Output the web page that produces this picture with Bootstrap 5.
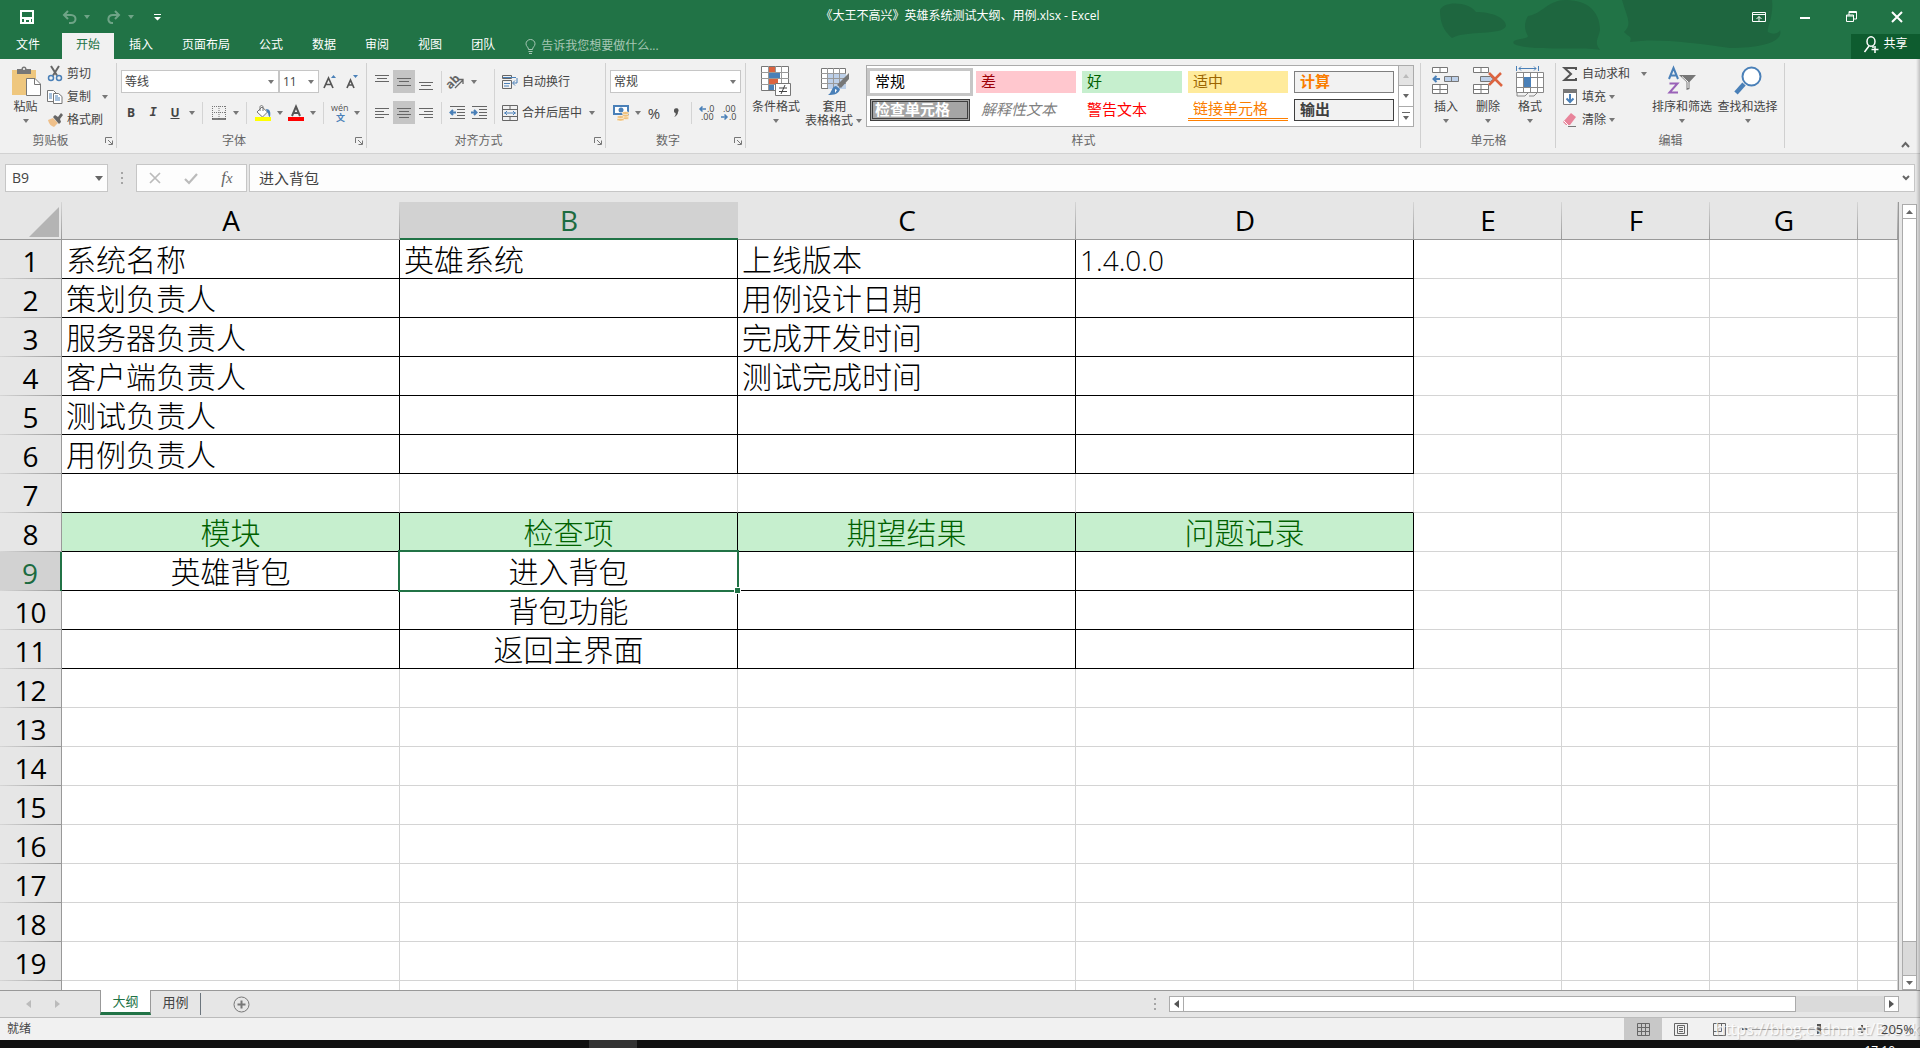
<!DOCTYPE html>
<html lang="zh-CN">
<head>
<meta charset="utf-8">
<meta name="viewport" content="width=device-width, initial-scale=1">
<title>《大王不高兴》英雄系统测试大纲、用例.xlsx - Excel</title>
<link href="https://cdn.jsdelivr.net/npm/bootstrap@5.3.0/dist/css/bootstrap.min.css" rel="stylesheet">
<style>
:root{--xl:#217346;--ink:#444;--line:#c6c6c6;--chrome:#e6e6e6}
body{font-family:"Open Sans","Noto Sans CJK SC",sans-serif;font-size:12px;line-height:14px;color:var(--ink);background:var(--chrome)}
button,input,select{font:inherit;color:inherit;border:0;background:none;padding:0;margin:0}
button{display:inline-flex;align-items:center;justify-content:center}
svg{display:block;flex:none;overflow:visible}
.ar::before{content:"";border:3px solid transparent;border-top:4px solid #777;border-bottom:0}
.ar{width:11px;flex:none;display:inline-flex;align-items:center;justify-content:center}
.app{height:100vh}
.topbar{background:var(--xl);color:#fff}
.titlebar{height:33px}
.titlebar .qat{padding-left:20px;gap:10px}
.qat .undo{margin-left:18px}
.dim{opacity:.35}
.topbar .ar::before{border-top-color:#fff}
.doctitle{left:0;right:0;top:9px}
.blobs{right:100px;top:0}
.winbtns button{width:46px;height:33px}
.tabrow{height:26px}
.tabrow a{color:#fff;text-decoration:none;padding:0 14px;margin-right:1px;height:26px;line-height:24px}
.tabrow a.file{padding:0 21px 0 16px}
.tabrow a.on{background:#f1f1f1;color:var(--xl)}
.tellme{color:#a6c7b5;margin-left:15px;gap:5px}
.tellme input{width:160px}
.tellme input::placeholder{color:#a6c7b5;opacity:1}
.share{background:#0e5c2f;width:69px;height:25px;gap:4px}
.ribbon{background:#f1f1f1;border-bottom:1px solid #d2d2d2;height:95px}
.grp{position:relative;flex:none;display:flex;flex-direction:column;margin-bottom:5px}
.grp::after{content:"";position:absolute;right:0;top:4px;bottom:0;width:1px;background:#d0d0d0}
.grp-body{display:flex;height:75px}
.grp-label{height:14px;text-align:center;color:#666;display:flex;align-items:center;margin-top:2px}
.grp-label span{flex:1}
.grp-label button{width:16px;height:14px}
.g-clip{width:117px}.g-font{width:250px}.g-align{width:239px}.g-num{width:140px}.g-style{width:675px}.g-cell{width:135px}.g-edit{width:229px}
.big{flex-direction:column;justify-content:flex-start;padding-top:7px}
.big svg{margin-bottom:4px;height:30px}
.big .ar{height:14px}
.stack3{padding-top:3px}
.sm{height:23px;gap:4px;justify-content:flex-start}
.rows{padding-top:11px;gap:8px}
.rows>div{height:23px;display:flex;align-items:center}
.ib{width:22px;height:23px;flex:none}
.ib.on{background:#c5c5c5}
.sep{width:1px;height:22px;background:#d4d4d4;margin:0 5px;flex:none}
.sep4{margin:0 4px}
.combo{position:relative;background:#fff;border:1px solid var(--line);height:23px;display:flex}
.combo select{appearance:none;width:100%;padding-left:3px;outline:0}
.combo .ar{position:absolute;right:2px;top:0;bottom:0;pointer-events:none}
.gallery{border:1px solid #ababab;background:#fff;height:62px;margin-top:6px;display:grid;grid-template-columns:repeat(5,100px);grid-auto-rows:22px;gap:6px;padding:5px 4px 5px 3px;font-size:15px}
.gallery button{justify-content:flex-start;padding:0 0 2px 5px;line-height:20px}
.st-sel{box-shadow:0 0 0 3px var(--line);color:#000}
.st-check{background:#a5a5a5;color:#fff;font-weight:700;border:3px double #3f3f3f}
.gallery .st-check{padding-left:2px;line-height:16px}
.galscroll{width:15px;height:62px;margin-top:6px;border:1px solid #ababab;border-left:0;background:#fff}
.galscroll button{flex:1;border-top:1px solid #ababab}
.galscroll button:first-child{border-top:0;background:#e4e4e4}
.formula{padding:10px 5px 10px;height:48px}
.fbox{background:#fdfdfd;border:1px solid var(--line);height:28px}
.namebox{width:103px}
.namebox input{width:80px;padding:0 0 2px 6px;font-size:14px}
.fxbtns{width:111px;margin-right:2px}
.fxbtns button{width:36px}
.fxglyph{font-family:"Liberation Serif",serif;font-size:17px;font-style:italic;color:#666}
.fxin{font-size:15px}
.fxin input{padding:0 0 2px 9px}
.dots{width:28px;display:flex;flex-direction:column;align-items:center;justify-content:center;gap:3px}
.dots i{width:2px;height:2px;background:#a5a5a5}
.sheetwrap{border-right:1px solid #999}
.sheet{table-layout:fixed;border-collapse:separate;border-spacing:0;width:100%;background:#fff;color:#000}
.sheet th{background:var(--chrome);font-size:28px;font-weight:400;text-align:center;padding:0}
.sheet thead th{height:38px;line-height:34px;border-bottom:1px solid #999;background:linear-gradient(#d6d6d6,#999) right/1px 100% no-repeat var(--chrome)}
.sheet thead th:not(:first-child){padding-bottom:1px}
.sheet tbody th{line-height:36px;padding-top:2px;border-right:1px solid #999;background:linear-gradient(90deg,#d6d6d6,#999) bottom/100% 1px no-repeat var(--chrome)}
.sheet thead th.cur{background:#d2d2d2;color:#1c6b40;border-bottom:2px solid var(--xl);padding-bottom:0}
.sheet tbody th.cur{background-color:#d2d2d2;color:#1c6b40;border-right:2px solid var(--xl)}
.sheet td{height:39px;padding:2px 4px 0;font-size:30px;font-weight:300;line-height:36px;white-space:nowrap;border-right:1px solid #d4d4d4;border-bottom:1px solid #d4d4d4}
.sheet .fr td:nth-child(-n+5){border-color:#000}
.sheet .pre td:nth-child(-n+5){border-bottom-color:#000}
.sheet .hd td:nth-child(-n+5){background:#c6efce;color:#006100}
.sheet .ctr td{text-align:center}
.sheet td.num{font-size:28px}
.sheet td.active-cell{position:relative}
.active-cell::before{content:"";position:absolute;inset:-2px -2px -2px -2px;border:2px solid var(--xl)}
.active-cell::after{content:"";position:absolute;right:-3px;bottom:-3px;width:5px;height:5px;background:var(--xl);outline:1px solid #fff}
.corner-tri{margin:3px 3px 0 auto;width:30px;height:30px;background:#b4b4b4;clip-path:polygon(100% 0,100% 100%,0 100%)}
.vscroll{width:15px;margin:2px 3px 0 3px;background:#dadada;border:1px solid #ababab;border-top:0;border-bottom:0}
.vscroll button,.hscroll button{background:#fff;border:1px solid #ababab;width:15px;height:15px;flex:none}
.vscroll button{margin-left:-1px}
.vthumb{background:#fff;border-bottom:1px solid #ababab;flex:0 0 92%}
.tabsbar{height:28px;border-top:1px solid #999;border-bottom:1px solid #bbb;font-size:13px;line-height:16px}
.tabsbar a{color:var(--ink);text-decoration:none;height:25px;width:49px;text-align:center;padding-top:3px}
.tabsbar a.on{background:#fff;color:var(--xl);border:1px solid #999;border-top:0;border-bottom:3px solid var(--xl);width:51px;margin-top:-1px}
.nav2{width:100px;padding-left:14px}
.nav2 button{width:29px}
.addsheet{margin-left:32px}
.hscroll{width:730px;height:16px;background:#dadada;margin-right:21px}
.hthumb{width:613px;background:#fff;border:1px solid #ababab;margin-left:-1px}
.status{background:#f1f1f1;height:22px}
.status .vb{width:38px;height:22px}
.status .vb.on{background:#c8c8c8}
.zoomr{appearance:none;width:102px;height:12px;background:linear-gradient(#999,#999) center/100% 1px no-repeat}
.zoomr::-webkit-slider-thumb{appearance:none;width:4px;height:10px;background:#555}
.zoompct{width:54px;padding-left:15px;font-size:13px}
.wmark{right:0;top:1px;font-size:16px;line-height:20px;color:#fff;opacity:.75;text-shadow:1px 1px 1px #aaa;pointer-events:none}
.task{background:#101010;height:8px;color:#fff;overflow:hidden}
.task .runapp{width:48px;background:#333;margin-left:589px}
.task .clock{margin-right:25px;padding-top:4px}
.edge{right:0;top:59px;bottom:8px;width:4px;background:linear-gradient(90deg,transparent,#0003);pointer-events:none}
</style>
</head>
<body>
<div class="app d-flex flex-column overflow-hidden position-relative">

<header class="topbar position-relative flex-shrink-0">
  <svg class="blobs position-absolute" width="400" height="52" viewBox="0 0 400 52" fill="#1e663f">
    <path d="M20 10C24 0 50 2 56 12c16 0 30 6 30 14-4 10-40 4-54 12-4-4-12-10-12-28zM108 16c14-2 20-16 38-16 24 0 34 14 34 30-2 10-6 12 0 20-16-4-70 2-86-6-4-6 14-4 14-8-4-6-4-14 0-20zM202 0h150c2 16-6 30-4 32 6 4 12 0 12-2 4 12-20 18-50 18-40-6-76-10-100-6 2-6 0-4-6-10 8-8 4-12-2-32z"/>
  </svg>
  <div class="titlebar d-flex align-items-center">
    <div class="qat d-flex align-items-center">
      <button aria-label="保存"><svg width="14" height="14" fill="none" stroke="#fff" stroke-width="2"><path d="M1 1h12v12H1zM1 8h12M5 13v-4h5v4"/></svg></button>
      <button class="dim undo" aria-label="撤消"><svg width="15" height="14" fill="none" stroke="#fff" stroke-width="2"><path d="M6 1L2 5l4 4M2 5h7c6 0 6 8 0 8H7"/></svg><span class="ar ms-1"></span></button>
      <button class="dim ms-1" aria-label="恢复"><svg width="15" height="14" fill="none" stroke="#fff" stroke-width="2"><path d="M9 1l4 4-4 4M13 5H7c-6 0-6 8-1 8h1"/></svg><span class="ar ms-1"></span></button>
      <button class="ms-2" aria-label="自定义快速访问工具栏"><svg width="7" height="8" fill="#fff"><path d="M0 1h7v1H0zM0 4h7L3.500 7.500z"/></svg></button>
    </div>
    <div class="doctitle position-absolute text-center">《大王不高兴》英雄系统测试大纲、用例.xlsx - Excel</div>
    <div class="winbtns d-flex ms-auto position-relative">
      <button aria-label="功能区显示选项"><svg width="14" height="12" fill="none" stroke="#fff"><path d="M.5 1.500h13v9H.5zM0 3.500h14M7 10V5.500M4.500 8L7 5.500 9.500 8"/></svg></button>
      <button aria-label="最小化"><svg width="10" height="12"><path d="M0 6h10v2H0z" fill="#fff"/></svg></button>
      <button aria-label="还原"><svg width="11" height="11" fill="none" stroke="#fff"><path d="M.5 4h7v6.500h-7zM.5 5h7M3 4V.5h7.500V8H8M3 1.500h7"/></svg></button>
      <button aria-label="关闭"><svg width="10" height="10" stroke="#fff" stroke-width="2"><path d="M0 0l10 10M10 0L0 10"/></svg></button>
    </div>
  </div>
  <nav class="tabrow d-flex align-items-center">
    <a class="file" href="#">文件</a><a class="on" href="#">开始</a><a href="#">插入</a><a href="#">页面布局</a><a href="#">公式</a><a href="#">数据</a><a href="#">审阅</a><a href="#">视图</a><a href="#">团队</a>
    <label class="tellme d-flex align-items-center"><svg width="11" height="15" fill="none" stroke="#a6c7b5"><path d="M3.500 10.500C3.500 8 1 7.500 1 4.800a4.500 4.300 0 0 1 9 0C10 7.500 7.500 8 7.500 10.500zM3.500 12.500h4M4 14.500h3"/></svg><input type="text" aria-label="告诉我" placeholder="告诉我您想要做什么..."></label>
    <button class="share ms-auto position-relative pb-1"><svg width="16" height="17" fill="none" stroke="#fff" stroke-width="1.500"><ellipse cx="8" cy="5.500" rx="4" ry="4.700"/><path d="M6 10l-4.500 6M10 10v2M8.500 13.500h7M12 10v7"/></svg>共享</button>
  </nav>
</header>

<section class="ribbon d-flex flex-shrink-0">
  <div class="grp g-clip">
    <div class="grp-body ps-1">
      <button class="big" style="width:43px"><svg width="30" height="30"><path d="M1 4h24v25H1z" fill="#efc77e"/><path d="M6 3h4.500a2.500 2.500 0 0 1 5 0H20v5H6z" fill="#777"/><circle cx="13" cy="3" r="1" fill="#fff"/><path d="M15.500 12.500h8.500l5.500 5.500v11.500h-14z" fill="#fff" stroke="#777"/><path d="M23.500 12.500v6h6" fill="none" stroke="#777"/></svg>粘贴<span class="ar"></span></button>
      <div class="stack3 d-flex flex-column">
        <button class="sm"><svg width="16" height="16" fill="none"><path d="M4 0l6 9.500M12 0L6 9.500" stroke="#666" stroke-width="2"/><circle cx="4" cy="12" r="2.500" stroke="#4a80b8" stroke-width="1.500"/><circle cx="12" cy="12" r="2.500" stroke="#4a80b8" stroke-width="1.500"/></svg>剪切</button>
        <button class="sm"><svg width="16" height="16" fill="#fff" stroke="#777"><path d="M.5 1.500h6l3 3v8h-9z"/><path d="M6.500 4.500h5l3.500 3v7H6.500z"/><path d="M2 5h3M2 7h3M2 9h3M8 9h5M8 11h5M8 7h3" stroke="#4a80b8"/></svg>复制<span class="ar ms-1"></span></button>
        <button class="sm"><svg width="16" height="16"><path d="M1 8l5-2 5 5-4 4c-3-1-5-3-6-7z" fill="#efc08a"/><path d="M6 5l2-2 3 2 3-4 2 2-3 4 1 3-2 2z" fill="#666"/></svg>格式刷</button>
      </div>
    </div>
    <div class="grp-label"><span>剪贴板</span><button aria-label="剪贴板选项"><svg width="8" height="8" fill="none" stroke="#777"><path d="M.5 6V.5H7M3 3l4 4M7.500 3.500v4h-4"/></svg></button></div>
  </div>

  <div class="grp g-font">
    <div class="grp-body rows flex-column">
      <div style="padding-left:4px"><span class="combo" style="width:158px"><select aria-label="字体"><option>等线</option></select><span class="ar"></span></span><span class="combo" style="width:40px"><select aria-label="字号"><option>11</option></select><span class="ar"></span></span>
        <button class="ib" aria-label="增大字号"><svg width="14" height="16"><path d="M1 14L5.500 4 10 14M2.800 10.500h5.500" fill="none" stroke="#555" stroke-width="1.700"/><path d="M8 4l2.500-3L13 4z" fill="#4a80b8"/></svg></button>
        <button class="ib" aria-label="减小字号"><svg width="14" height="16"><path d="M2 14L5.500 6 9 14M3.300 11h4.500" fill="none" stroke="#555" stroke-width="1.700"/><path d="M8 1h5l-2.500 3z" fill="#4a80b8"/></svg></button></div>
      <div style="padding-left:3px">
        <button class="ib fw-bold">B</button><button class="ib fst-italic fw-bold font-monospace">I</button><button class="ib fw-bold text-decoration-underline">U</button><span class="ar"></span><span class="sep"></span>
        <button class="ib" aria-label="边框"><svg width="14" height="14" fill="none" stroke="#777"><path d="M.5 0v13M7 0v13M13.500 0v13M0 .5h14M0 6.500h14" stroke-dasharray="1 1"/><path d="M0 13h14" stroke="#555" stroke-width="1.500"/></svg></button><span class="ar"></span><span class="sep"></span>
        <button class="ib" aria-label="填充颜色"><svg width="17" height="16"><path d="M2 7l5-5 5.500 5-5 5z" fill="#fff" stroke="#777"/><path d="M5 6V2c0-2 3-2 3 0v4" fill="none" stroke="#777"/><path d="M11 4c4 0 5 3 4 8-2 0-1-4-3-5z" fill="#4a80b8"/><path d="M0 12h16v4H0z" fill="#ff0"/></svg></button><span class="ar"></span>
        <button class="ib" aria-label="字体颜色"><svg width="16" height="16"><path d="M4 11L8 1.500 12 11M5.500 8h5" fill="none" stroke="#555" stroke-width="2"/><path d="M0 12h16v4H0z" fill="red"/></svg></button><span class="ar"></span><span class="sep"></span>
        <button class="ib" aria-label="拼音指南"><svg width="17" height="18"><text x="-1" y="7" font-size="9" fill="#555">wén</text><text x="4" y="17" font-size="9" font-weight="700" fill="#4a80b8">文</text></svg></button><span class="ar"></span>
      </div>
    </div>
    <div class="grp-label"><span>字体</span><button aria-label="字体选项"><svg width="8" height="8" fill="none" stroke="#777"><path d="M.5 6V.5H7M3 3l4 4M7.500 3.500v4h-4"/></svg></button></div>
  </div>

  <div class="grp g-align">
    <div class="grp-body ps-1">
      <div class="rows d-flex flex-column" style="width:119px">
        <div>
          <button class="ib" aria-label="顶端对齐"><svg width="14" height="16" stroke="#666"><path d="M0 1.500h14M2 4.500h10M0 7.500h14"/></svg></button>
          <button class="ib on" aria-label="垂直居中"><svg width="14" height="16" stroke="#666"><path d="M0 4.500h14M2 7.500h10M0 11.500h14"/></svg></button>
          <button class="ib" aria-label="底端对齐"><svg width="14" height="16" stroke="#666"><path d="M0 8.500h14M2 11.500h10M0 15.500h14"/></svg></button>
          <span class="sep sep4"></span>
          <button class="ib" aria-label="方向"><svg width="18" height="17"><text x="-1" y="13" font-size="12" font-weight="700" fill="#666" transform="rotate(-45 5 11)">ab</text><path d="M7 15l8-8M15 11V6.500h-4" fill="none" stroke="#666" stroke-width="1.300"/></svg></button><span class="ar"></span>
        </div>
        <div>
          <button class="ib" aria-label="左对齐"><svg width="14" height="12" stroke="#666"><path d="M0 1.500h14M0 4.500h9M0 7.500h14M0 10.500h9"/></svg></button>
          <button class="ib on" aria-label="居中"><svg width="14" height="12" stroke="#666"><path d="M0 1.500h14M2 4.500h10M0 7.500h14M2 10.500h10"/></svg></button>
          <button class="ib" aria-label="右对齐"><svg width="14" height="12" stroke="#666"><path d="M0 1.500h14M5 4.500h9M0 7.500h14M5 10.500h9"/></svg></button>
          <span class="sep sep4"></span>
          <button class="ib" aria-label="减少缩进"><svg width="16" height="14" fill="none" stroke="#666"><path d="M1 .5h15M8 3.500h8M8 6.500h8M8 9.500h8M1 12.500h15"/><path d="M7 6.500H2M4 4L1.500 6.500 4 9" stroke="#4a80b8" stroke-width="2"/></svg></button>
          <button class="ib" aria-label="增加缩进"><svg width="16" height="14" fill="none" stroke="#666"><path d="M1 .5h15M8 3.500h8M8 6.500h8M8 9.500h8M1 12.500h15"/><path d="M0 6.500h5M3 4l2.500 2.500L3 9" stroke="#4a80b8" stroke-width="2"/></svg></button>
        </div>
      </div>
      <span class="sep sep4" style="height:55px;margin-top:10px"></span>
      <div class="rows d-flex flex-column" style="padding-left:3px">
        <div><button class="sm"><svg width="16" height="16" fill="none" stroke="#666"><path d="M.5 1.500h9v3h-9zM.5 6.500h9v8h-9z"/><path d="M1 3.500h13M2 9.500h6M2 12h5M15 4v5h-4M13 6.500L10.500 9l2.500 2.500" stroke="#4a80b8"/></svg>自动换行</button></div>
        <div><button class="sm"><svg width="16" height="16" fill="none" stroke="#666"><path d="M.5.5h15v15H.5zM0 4.500h16M0 11.500h16M8 0v4M8 12v4"/><path d="M2 8h12M5 6L3 8l2 2M11 6l2 2-2 2" stroke="#4a80b8"/></svg>合并后居中<span class="ar"></span></button></div>
      </div>
    </div>
    <div class="grp-label"><span>对齐方式</span><button aria-label="对齐选项"><svg width="8" height="8" fill="none" stroke="#777"><path d="M.5 6V.5H7M3 3l4 4M7.500 3.500v4h-4"/></svg></button></div>
  </div>

  <div class="grp g-num">
    <div class="grp-body rows flex-column ps-1">
      <div><span class="combo" style="width:131px"><select aria-label="数字格式"><option>常规</option></select><span class="ar"></span></span></div>
      <div>
        <button class="ib" aria-label="会计数字格式"><svg width="17" height="16"><path d="M1 1h14v8H1z" fill="#fff" stroke="#4a80b8" stroke-width="2"/><circle cx="8" cy="5" r="2.500" fill="#4a80b8"/><g fill="#efc07a" stroke="#fff" stroke-width=".5"><ellipse cx="12.500" cy="13" rx="3.500" ry="1.500"/><ellipse cx="12.500" cy="10.500" rx="3.500" ry="1.500"/><ellipse cx="12.500" cy="8" rx="3.500" ry="1.500"/><ellipse cx="7.500" cy="14.500" rx="3.500" ry="1.500"/><ellipse cx="7.500" cy="12" rx="3.500" ry="1.500"/></g></svg></button><span class="ar"></span>
        <button class="ib" style="font-size:15px">%</button><button class="ib" aria-label="千位分隔"><svg width="6" height="10"><path d="M1 2.500a2.300 2.300 0 1 1 4 1.500C5 6.500 3.500 8 1 9c1.500-1.500 2-2.500 1.500-4A2 2 0 0 1 1 2.500z" fill="#555"/></svg></button><span class="sep sep4"></span>
        <button class="ib" aria-label="增加小数位"><svg width="16" height="16"><text x="8" y="7" font-size="9" fill="#444">.0</text><text x="2" y="15" font-size="9" fill="#444">.00</text><path d="M7 4H1M3.500 1.500L1 4l2.500 2.500" fill="none" stroke="#4a80b8" stroke-width="1.500"/></svg></button>
        <button class="ib" aria-label="减少小数位"><svg width="16" height="16"><text x="2" y="7" font-size="9" fill="#444">.00</text><text x="8" y="15" font-size="9" fill="#444">.0</text><path d="M0 12h6M3.500 9.500L6 12l-2.500 2.500" fill="none" stroke="#4a80b8" stroke-width="1.500"/></svg></button>
      </div>
    </div>
    <div class="grp-label"><span>数字</span><button aria-label="数字选项"><svg width="8" height="8" fill="none" stroke="#777"><path d="M.5 6V.5H7M3 3l4 4M7.500 3.500v4h-4"/></svg></button></div>
  </div>

  <div class="grp g-style">
    <div class="grp-body" style="padding-left:2px">
      <button class="big" style="width:56px"><svg width="30" height="30"><path d="M.5.5h27v24H.5z" fill="#fff" stroke="#777"/><path d="M8 1h6v6H8zM8 13h9v5H8z" fill="#dc6440"/><path d="M8 7h11v5H8zM8 19h5v5H8z" fill="#4a80b8"/><path d="M0 6.500h28M0 12.500h28M0 18.500h28M7.500 0v24M20.500 0v24M14.500 0v6" stroke="#999" fill="none"/><path d="M14.500 17.500h15v12h-15z" fill="#fff" stroke="#777"/><path d="M18 22h8M18 25.500h8M24 19l-4 9" stroke="#444"/></svg>条件格式<span class="ar"></span></button>
      <button class="big" style="width:61px"><svg width="30" height="30"><path d="M1.500 2.500h24v20h-24z" fill="#fff" stroke="#777"/><path d="M8 8h18v15H8z" fill="#bdd0e9"/><path d="M1 7.500h25M1 12.500h25M1 17.500h25M7.500 2v20M13.500 2v20M19.500 2v20" stroke="#999" fill="none"/><path d="M29 7v6l-8 9-4-3z" fill="#777"/><path d="M16 20l4 3c-1 5-6 6-12 6 4-2 3-8 8-9z" fill="#4a80b8"/><path d="M15 23l2 1-2 3z" fill="#fff"/></svg>套用<span class="d-flex">表格格式<span class="ar"></span></span></button>
      <div class="gallery" style="margin-left:1px">
        <button class="st-sel">常规</button><button style="background:#ffc7ce;color:#9c0006">差</button><button style="background:#c6efce;color:#006100">好</button><button style="background:#ffeb9c;color:#9c6500">适中</button><button style="background:#f2f2f2;color:#fa7d00;border:1px solid #7f7f7f" class="fw-bold">计算</button>
        <button class="st-check">检查单元格</button><button class="fst-italic" style="color:#7f7f7f">解释性文本</button><button style="color:red">警告文本</button><button style="color:#fa7d00;border-bottom:3px double #ff8001">链接单元格</button><button style="background:#f2f2f2;color:#3f3f3f;border:1px solid #3f3f3f" class="fw-bold">输出</button>
      </div>
      <div class="galscroll d-flex flex-column">
        <button aria-label="上一行"><svg width="6" height="4"><path d="M0 4l3-4 3 4z" fill="#bbb"/></svg></button><button aria-label="下一行"><svg width="6" height="4"><path d="M0 0h6L3 4z" fill="#666"/></svg></button><button aria-label="其他"><svg width="8" height="8"><path d="M0 0h8v1H0zM1 4h6L4 8z" fill="#666"/></svg></button>
      </div>
    </div>
    <div class="grp-label"><span>样式</span></div>
  </div>

  <div class="grp g-cell">
    <div class="grp-body ps-1">
      <button class="big" style="width:42px"><svg width="28" height="30" fill="#fff" stroke="#777"><path d="M.5 1.500h15v5H.5zM8 1v6M.5 18.500h15v9H.5zM8 18v10M0 23.500h16"/><path d="M12.500 10.500h14v5h-14zM19.500 10v6" fill="#bdd0e9"/><path d="M8 13H2M4.500 10L1.500 13l3 3" fill="none" stroke="#4a80b8" stroke-width="2"/></svg>插入<span class="ar"></span></button>
      <button class="big" style="width:42px"><svg width="30" height="30" fill="#fff" stroke="#777"><path d="M.5 1.500h15v5H.5zM8 1v6M.5 18.500h15v9H.5zM8 18v10M0 23.500h16"/><path d="M7.500 10.500h10l3 2.500-3 2.500h-10z" fill="#bdd0e9"/><path d="M16 7l13 13M28 7L16 19" fill="none" stroke="#dc6440" stroke-width="2.500"/></svg>删除<span class="ar"></span></button>
      <button class="big" style="width:42px"><svg width="29" height="30" fill="#fff" stroke="#888"><path d="M.5 6.500h27v20H.5z"/><path d="M0 11.500h28M0 21.500h28M7.500 6v20M14.500 6v20M21.500 6v20M1 27v3h8l3-3M13 30h5l3-3" fill="none"/><path d="M8 11h7v10H8z" fill="#4a80b8" stroke="none"/><path d="M.5 0v5M22.500 0v5M3 2.500h17M5 .5l-2 2 2 2M18 .5l2 2-2 2" stroke="#4a80b8" fill="none"/></svg>格式<span class="ar"></span></button>
    </div>
    <div class="grp-label"><span>单元格</span></div>
  </div>

  <div class="grp g-edit">
    <div class="grp-body" style="padding-left:6px">
      <div class="stack3 d-flex flex-column" style="width:88px">
        <button class="sm"><svg width="16" height="16" fill="none" stroke="#555" stroke-width="2"><path d="M14 4V2H2.500L9 8l-6.500 6H14v-2"/></svg>自动求和<span class="ar ms-1"></span></button>
        <button class="sm"><svg width="16" height="16"><path d="M1.500.5h13v15h-13z" fill="#fff" stroke="#777"/><path d="M1 0h14v4H1z" fill="#777"/><path d="M8 5v8M4.500 9.500L8 13l3.500-3.500" fill="none" stroke="#4a80b8" stroke-width="2"/></svg><span class="d-flex">填充<span class="ar"></span></span></button>
        <button class="sm"><svg width="16" height="16"><path d="M9 1l5 4-6 8H4L1 10z" fill="#e8849a"/><path d="M2 9l4 4" stroke="#fff"/><path d="M6 14.500h8" stroke="#777"/></svg><span class="d-flex">清除<span class="ar"></span></span></button>
      </div>
      <button class="big" style="width:64px"><svg width="30" height="30" fill="none"><path d="M2 13L6.500 2 11 13M3.500 9.500h6" stroke="#4a80b8" stroke-width="2"/><path d="M2.500 17.500h8L2.500 26.500h8.500" stroke="#9a62b8" stroke-width="2"/><path d="M12 9h17l-6.500 7v7l-3 1v-8z" fill="#777"/><path d="M15 10.500l6 5.500v6" stroke="#fff"/></svg>排序和筛选<span class="ar"></span></button>
      <button class="big" style="width:67px"><svg width="30" height="30" fill="none"><path d="M11 18L3 27" stroke="#4a80b8" stroke-width="4.500"/><circle cx="18.500" cy="10.500" r="9" fill="#fff" stroke="#4a80b8" stroke-width="2"/></svg>查找和选择<span class="ar"></span></button>
    </div>
    <div class="grp-label"><span>编辑</span></div>
  </div>
  <button class="ms-auto align-self-end" style="margin-right:10px;height:18px" aria-label="折叠功能区"><svg width="9" height="7" fill="none" stroke="#666" stroke-width="2"><path d="M1 6l3.500-4L8 6"/></svg></button>
</section>

<section class="formula d-flex flex-shrink-0">
  <div class="fbox namebox d-flex align-items-center justify-content-between"><input aria-label="名称框" value="B9"><button class="me-1" aria-label="展开名称"><svg width="8" height="5"><path d="M0 0h8L4 5z" fill="#666"/></svg></button></div>
  <div class="dots"><i></i><i></i><i></i></div>
  <div class="fbox fxbtns d-flex">
    <button aria-label="取消"><svg width="12" height="10" stroke="#bbb" stroke-width="1.700"><path d="M1 0l10 10M11 0L1 10"/></svg></button>
    <button aria-label="输入"><svg width="14" height="11" fill="none" stroke="#bbb" stroke-width="2.200"><path d="M1 6l4 4 8-9"/></svg></button>
    <button aria-label="插入函数" class="fxglyph">f<small>x</small></button>
  </div>
  <div class="fbox fxin flex-fill d-flex align-items-center"><input class="flex-fill" aria-label="编辑栏" value="进入背包"><button class="me-1" aria-label="展开编辑栏"><svg width="8" height="6" fill="none" stroke="#666" stroke-width="2"><path d="M1 1l3 3 3-3"/></svg></button></div>
</section>

<main class="d-flex flex-fill overflow-hidden" style="min-height:0">
  <div class="sheetwrap flex-fill overflow-hidden">
    <table class="sheet">
      <colgroup><col style="width:62px"><col style="width:338px"><col style="width:338px"><col style="width:338px"><col style="width:338px"><col style="width:148px"><col style="width:148px"><col style="width:148px"><col></colgroup>
      <thead><tr><th><div class="corner-tri"></div></th><th>A</th><th class="cur">B</th><th>C</th><th>D</th><th>E</th><th>F</th><th>G</th><th></th></tr></thead>
      <tbody>
        <tr class="fr"><th>1</th><td>系统名称</td><td>英雄系统</td><td>上线版本</td><td class="num">1.4.0.0</td><td></td><td></td><td></td><td></td></tr>
        <tr class="fr"><th>2</th><td>策划负责人</td><td></td><td>用例设计日期</td><td></td><td></td><td></td><td></td><td></td></tr>
        <tr class="fr"><th>3</th><td>服务器负责人</td><td></td><td>完成开发时间</td><td></td><td></td><td></td><td></td><td></td></tr>
        <tr class="fr"><th>4</th><td>客户端负责人</td><td></td><td>测试完成时间</td><td></td><td></td><td></td><td></td><td></td></tr>
        <tr class="fr"><th>5</th><td>测试负责人</td><td></td><td></td><td></td><td></td><td></td><td></td><td></td></tr>
        <tr class="fr"><th>6</th><td>用例负责人</td><td></td><td></td><td></td><td></td><td></td><td></td><td></td></tr>
        <tr class="pre"><th>7</th><td></td><td></td><td></td><td></td><td></td><td></td><td></td><td></td></tr>
        <tr class="fr hd ctr"><th>8</th><td>模块</td><td>检查项</td><td>期望结果</td><td>问题记录</td><td></td><td></td><td></td><td></td></tr>
        <tr class="fr ctr"><th class="cur">9</th><td>英雄背包</td><td class="active-cell">进入背包</td><td></td><td></td><td></td><td></td><td></td><td></td></tr>
        <tr class="fr ctr"><th>10</th><td></td><td>背包功能</td><td></td><td></td><td></td><td></td><td></td><td></td></tr>
        <tr class="fr ctr"><th>11</th><td></td><td>返回主界面</td><td></td><td></td><td></td><td></td><td></td><td></td></tr>
        <tr><th>12</th><td></td><td></td><td></td><td></td><td></td><td></td><td></td><td></td></tr>
        <tr><th>13</th><td></td><td></td><td></td><td></td><td></td><td></td><td></td><td></td></tr>
        <tr><th>14</th><td></td><td></td><td></td><td></td><td></td><td></td><td></td><td></td></tr>
        <tr><th>15</th><td></td><td></td><td></td><td></td><td></td><td></td><td></td><td></td></tr>
        <tr><th>16</th><td></td><td></td><td></td><td></td><td></td><td></td><td></td><td></td></tr>
        <tr><th>17</th><td></td><td></td><td></td><td></td><td></td><td></td><td></td><td></td></tr>
        <tr><th>18</th><td></td><td></td><td></td><td></td><td></td><td></td><td></td><td></td></tr>
        <tr><th>19</th><td></td><td></td><td></td><td></td><td></td><td></td><td></td><td></td></tr>
        <tr><th></th><td></td><td></td><td></td><td></td><td></td><td></td><td></td><td></td></tr>
      </tbody>
    </table>
  </div>
  <div class="vscroll d-flex flex-column flex-shrink-0">
    <button aria-label="向上滚动"><svg width="7" height="4"><path d="M0 4l3.500-4L7 4z" fill="#666"/></svg></button><div class="vthumb"></div><button class="mt-auto" aria-label="向下滚动"><svg width="7" height="4"><path d="M0 0h7L3.500 4z" fill="#666"/></svg></button>
  </div>
</main>

<nav class="tabsbar d-flex flex-shrink-0">
  <div class="nav2 d-flex align-items-center"><button aria-label="上一张"><svg width="5" height="8"><path d="M5 0v8L0 4z" fill="#bbb"/></svg></button><button aria-label="下一张"><svg width="5" height="8"><path d="M0 0v8l5-4z" fill="#bbb"/></svg></button></div>
  <a class="on" href="#">大纲</a><a href="#">用例</a><span class="sep m-0 align-self-center bg-secondary"></span>
  <button class="addsheet" aria-label="新工作表"><svg width="17" height="17" fill="none" stroke="#777"><circle cx="8.500" cy="8.500" r="7.500"/><path d="M4.500 8.500h8M8.500 4.500v8" stroke-width="2"/></svg></button>
  <div class="dots ms-auto"><i></i><i></i><i></i></div>
  <div class="hscroll d-flex align-self-center"><button class="h-100" aria-label="向左滚动"><svg width="5" height="8"><path d="M5 0v8L0 4z" fill="#555"/></svg></button><div class="hthumb"></div><button class="ms-auto h-100" aria-label="向右滚动"><svg width="5" height="8"><path d="M0 0v8l5-4z" fill="#555"/></svg></button></div>
</nav>

<footer class="status d-flex align-items-center flex-shrink-0 position-relative">
  <span style="padding-left:7px">就绪</span>
  <button class="vb on ms-auto" aria-label="普通"><svg width="13" height="13" fill="none" stroke="#666"><path d="M.5.5h12v12H.5zM0 4.500h13M0 8.500h13M4.500 0v13M8.500 0v13"/></svg></button>
  <button class="vb" aria-label="页面布局"><svg width="14" height="13" fill="none" stroke="#666"><path d="M.5.5h13v12H.5zM3.500 2.500h7v8h-7zM5 4.500h4M5 6.500h4M5 8.500h4"/></svg></button>
  <button class="vb" aria-label="分页预览"><svg width="13" height="13" fill="none" stroke="#666"><path d="M.5.5h12v12H.5zM.5 8.500h8V.5M4.500 0v8"/></svg></button>
  <button class="ms-1" aria-label="缩小"><svg width="6" height="2"><path d="M0 0h6v2H0z" fill="#555"/></svg></button>
  <input class="zoomr mx-1" type="range" aria-label="显示比例" min="10" max="400" value="270">
  <button aria-label="放大"><svg width="8" height="8" stroke="#555" stroke-width="2"><path d="M0 4h8M4 0v8"/></svg></button>
  <span class="wmark position-absolute">https://blog.csdn.net/Brook</span>
  <span class="zoompct position-relative">205%</span>
</footer>
<div class="task d-flex flex-shrink-0"><span class="runapp"></span><span class="clock ms-auto">17:10</span></div>
<div class="edge position-absolute"></div>
</div>
<script src="https://cdn.jsdelivr.net/npm/bootstrap@5.3.0/dist/js/bootstrap.bundle.min.js"></script>
</body>
</html>
